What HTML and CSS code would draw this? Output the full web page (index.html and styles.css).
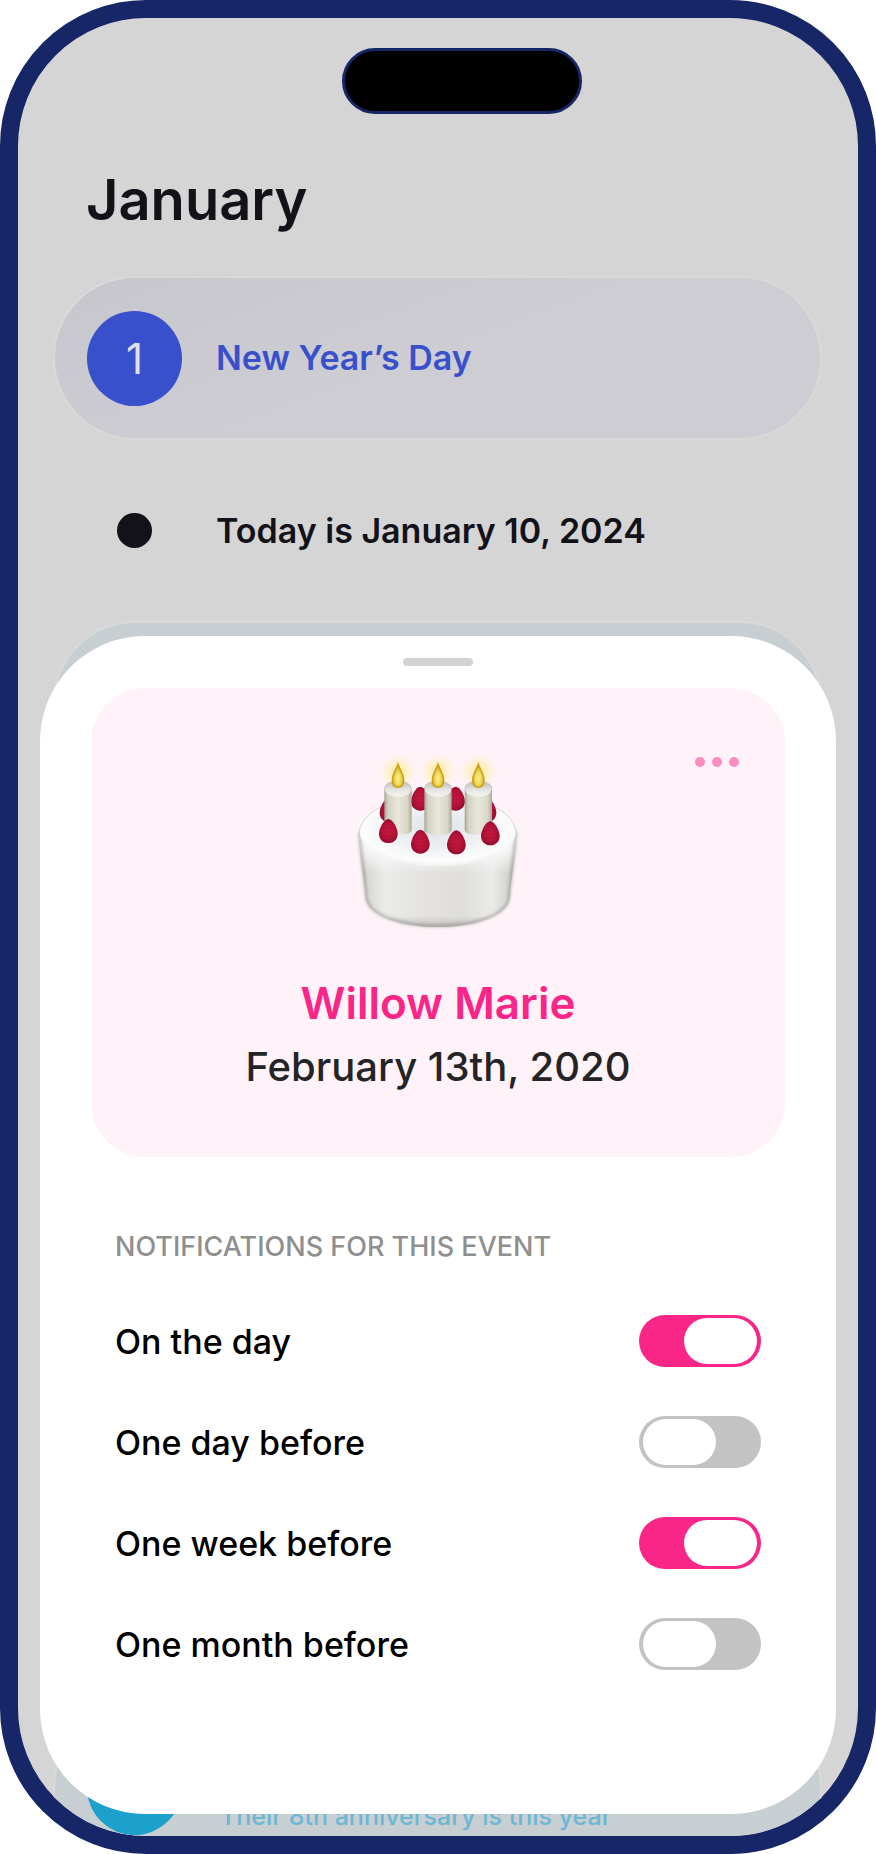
FILE: index.html
```html
<!DOCTYPE html>
<html lang="en">
<head>
<meta charset="utf-8">
<meta name="viewport" content="width=device-width, initial-scale=1">
<title>January</title>
<link rel="stylesheet" href="styles.css">
</head>
<body>
<div class="phone">
  <main class="timeline">
    <div class="island"></div>
    <h1 class="month">January</h1>
    <article class="event event--blue">
      <span class="event__day">1</span>
      <span class="event__title">New Year’s Day</span>
    </article>
    <div class="today">
      <span class="today__marker"><span class="today__dot"></span></span>
      <span class="event__title">Today is January 10, 2024</span>
    </div>
    <article class="event event--teal"></article>
    <article class="event event--teal event--last">
      <span class="event__day"></span>
      <span class="event__note">Their 8th anniversary is this year</span>
    </article>
  </main>

  <section class="sheet">
    <div class="sheet__handle"></div>
    <div class="card">
      <svg class="card__cake" viewBox="-7 -3 600 600" aria-hidden="true">
        <defs>
          <linearGradient id="side" x1="0" x2="1" y1="0" y2="0">
            <stop offset="0" stop-color="#b4b4b1"/><stop offset=".05" stop-color="#d6d6d3"/>
            <stop offset=".16" stop-color="#ebebea"/><stop offset=".35" stop-color="#e5e4e2"/>
            <stop offset=".65" stop-color="#dfdedb"/><stop offset=".85" stop-color="#eaeae9"/>
            <stop offset=".95" stop-color="#d3d3cf"/><stop offset="1" stop-color="#aaaaa7"/>
          </linearGradient>
          <linearGradient id="shade" x1="0" x2="0" y1="0" y2="1">
            <stop offset="0" stop-color="#fff"/><stop offset=".22" stop-color="#fff" stop-opacity=".75"/>
            <stop offset=".45" stop-color="#fff" stop-opacity="0"/><stop offset=".88" stop-color="#aaa" stop-opacity="0"/>
            <stop offset="1" stop-color="#777" stop-opacity=".4"/>
          </linearGradient>
          <radialGradient id="top" cx=".5" cy=".45" r=".55">
            <stop offset="0" stop-color="#dde2e6"/><stop offset=".55" stop-color="#eff2f4"/>
            <stop offset=".88" stop-color="#fcfcfc"/><stop offset="1" stop-color="#f1f1f1"/>
          </radialGradient>
          <linearGradient id="wax" x1="0" x2="1" y1="0" y2="0">
            <stop offset="0" stop-color="#a5a494"/><stop offset=".13" stop-color="#d2d1c2"/>
            <stop offset=".5" stop-color="#eae8dc"/><stop offset=".85" stop-color="#d8d6c7"/>
            <stop offset="1" stop-color="#aaa899"/>
          </linearGradient>
          <linearGradient id="waxtop" x1="0" x2="0" y1="0" y2="1">
            <stop offset="0" stop-color="#b9bab7"/><stop offset=".55" stop-color="#e4e5e2"/>
            <stop offset="1" stop-color="#f4f4ef"/>
          </linearGradient>
          <radialGradient id="glow">
            <stop offset="0" stop-color="#ffe98a" stop-opacity=".9"/><stop offset=".5" stop-color="#ffeeb0" stop-opacity=".6"/>
            <stop offset="1" stop-color="#fff3d0" stop-opacity="0"/>
          </radialGradient>
          <radialGradient id="fire" cx=".5" cy=".62" r=".5">
            <stop offset="0" stop-color="#f6ee8c"/><stop offset=".5" stop-color="#f0dc62"/>
            <stop offset="1" stop-color="#d8aa18"/>
          </radialGradient>
          <radialGradient id="red" cx=".5" cy=".5" r=".55">
            <stop offset="0" stop-color="#c4193f"/><stop offset=".6" stop-color="#b51238"/>
            <stop offset="1" stop-color="#8c0d2d"/>
          </radialGradient>
          <g id="berry">
            <path d="M0-36C13-36 28-8 28 8C28 25 16 36 0 36S-28 25-28 8C-28-8-13-36 0-36Z" fill="url(#red)"/>
            <path d="M-20-5L18-12M-24 7L23-2M-23 18L22 10M-13 28L17 22" stroke="#850b29" stroke-opacity=".35" stroke-width="2"/>
          </g>
          <g id="candle">
            <path d="M-41 146C-41 128-23 118 0 118S41 128 41 146V266C41 277 23 281 0 281S-41 277-41 266Z" fill="url(#wax)"/>
            <path d="M-39 145C-39 129-22 120 0 120S39 129 39 145C39 160 22 167 0 167S-39 160-39 145Z" fill="url(#waxtop)"/>
            <path d="M0 69C5 87 17 98 17 117C17 131 10 139 0 139S-17 131-17 117C-17 98-5 87 0 69Z" fill="url(#fire)" stroke="#cb9c16" stroke-width="4"/>
          </g>
          <filter id="soft" x="-10%" y="-10%" width="120%" height="120%"><feGaussianBlur stdDeviation="5"/></filter>
        </defs>
        <path d="M56 266C58 350 70 400 76 470C80 520 170 558 292 558S504 520 508 470C514 400 526 350 528 266Z" fill="url(#side)"/>
        <path d="M56 266C58 350 70 400 76 470C80 520 170 558 292 558S504 520 508 470C514 400 526 350 528 266Z" fill="url(#shade)"/>
        <path d="M58 275C62 350 73 410 78 470C83 518 170 555 292 555S501 518 506 470C511 410 522 350 526 275" fill="none" stroke="#91918c" stroke-opacity=".6" stroke-width="8" filter="url(#soft)"/>
        <path d="M56 264C58 210 150 168 292 168S526 210 528 264C528 330 430 376 292 376S56 330 56 264Z" fill="url(#top)"/>
        <path d="M56 286C53 214 145 168 292 168S531 214 528 286" fill="none" stroke="#bdbdbb" stroke-opacity=".7" stroke-width="3"/>
        <use href="#berry" x="146" y="207"/><use href="#berry" x="440" y="207"/>
        <use href="#berry" x="240" y="173"/><use href="#berry" x="346" y="173"/>
        <circle cx="173" cy="92" r="57" fill="url(#glow)"/><circle cx="293" cy="92" r="57" fill="url(#glow)"/><circle cx="415" cy="92" r="57" fill="url(#glow)"/>
        <use href="#candle" x="173"/><use href="#candle" x="293"/><use href="#candle" x="414"/>
        <use href="#berry" x="144" y="270"/><use href="#berry" x="240" y="302"/>
        <use href="#berry" x="348" y="304"/><use href="#berry" x="450" y="277"/>
      </svg>
      <button class="card__more" type="button" aria-label="More options"><span></span><span></span><span></span></button>
      <h2 class="card__name">Willow Marie</h2>
      <p class="card__date">February 13th, 2020</p>
    </div>
    <form class="notify">
      <h3 class="notify__heading">NOTIFICATIONS FOR THIS EVENT</h3>
      <label class="notify__row">On the day<input class="switch" type="checkbox" checked></label>
      <label class="notify__row">One day before<input class="switch" type="checkbox"></label>
      <label class="notify__row">One week before<input class="switch" type="checkbox" checked></label>
      <label class="notify__row">One month before<input class="switch" type="checkbox"></label>
    </form>
  </section>
</div>
</body>
</html>
```
FILE: styles.css
```css
* { box-sizing: border-box; }

body {
  margin: 0;
  background: #fff;
  font-family: Inter, "Liberation Sans", sans-serif;
}

h1, h2, h3, p { margin: 0; }

.phone {
  display: grid;
  min-height: 100vh;
  border: 18px solid #172666;
  border-radius: 146px;
  background: #d5d5d5;
  overflow: hidden;
}

.timeline {
  grid-area: 1 / 1;
  display: flex;
  flex-direction: column;
  padding: 30px 36px 0 35px;
}

.island {
  width: 240px;
  height: 66px;
  margin-left: 48px;
  align-self: center;
  border: 3px solid #172666;
  border-radius: 33px;
  background: #000;
}

.month {
  margin: 54px 0 44px 33px;
  font-size: 56px;
  font-weight: 600;
  line-height: 64px;
  color: #131219;
}

.event {
  display: flex;
  align-items: center;
  gap: 34px;
  height: 164px;
  padding: 0 32px;
  border: 2px solid #d9d9da;
  border-radius: 82px;
}

.event--blue {
  background: linear-gradient(160deg, #c6c7cc, #cdcdd3 50%);
  color: #3850cb;
}

.event--teal {
  background: #c8cfd2;
  color: #6cb7d3;
}

.event--last {
  align-items: flex-start;
  height: 130px;
  margin-top: auto;
  padding-top: 32px;
  border-bottom: 0;
  border-radius: 82px 82px 0 0;
}

.event__day {
  display: flex;
  align-items: center;
  justify-content: center;
  width: 95px;
  height: 95px;
  border-radius: 50%;
  background: #3850cb;
  color: #e0e0e6;
  font-size: 42px;
}

.event--teal .event__day { background: #1ba1cc; }

.event__title {
  font-size: 34px;
  font-weight: 600;
  line-height: 44px;
}

.event__note {
  padding: 60px 0 0 4px;
  font-size: 25px;
  font-weight: 500;
  line-height: 32px;
}

.today {
  display: flex;
  align-items: center;
  gap: 34px;
  height: 181px;
  padding: 0 34px;
  color: #131219;
}

.today__marker {
  display: flex;
  justify-content: center;
  width: 95px;
}

.today__dot {
  width: 35px;
  height: 35px;
  border-radius: 50%;
  background: #131219;
}

.sheet {
  grid-area: 1 / 1;
  align-self: end;
  display: flex;
  flex-direction: column;
  margin: 0 22px 22px;
  padding: 22px 51px 144px;
  border-radius: 105px;
  background: #fff;
  z-index: 1;
}

.sheet__handle {
  width: 70px;
  height: 8px;
  margin-bottom: 22px;
  align-self: center;
  border-radius: 4px;
  background: #d2d2d2;
}

.card {
  display: grid;
  justify-items: center;
  padding: 52px 40px 58px;
  border-radius: 54px;
  background: #fff3f9;
  text-align: center;
}

.card__cake {
  grid-area: 1 / 1;
  width: 200px;
  height: 200px;
  margin-bottom: 31px;
}

.card__more {
  grid-area: 1 / 1;
  justify-self: end;
  align-self: start;
  display: flex;
  align-items: center;
  gap: 7px;
  height: 44px;
  padding: 0 6px;
  border: 0;
  background: none;
}

.card__more span {
  width: 10px;
  height: 10px;
  border-radius: 50%;
  background: #fb8cc0;
}

.card__name {
  font-size: 44px;
  font-weight: 600;
  line-height: 64px;
  color: #f92587;
}

.card__date {
  font-size: 40px;
  font-weight: 500;
  line-height: 64px;
  color: #242426;
}

.notify {
  display: flex;
  flex-direction: column;
  gap: 49px;
  padding: 74px 24px 0;
}

.notify__heading {
  margin-bottom: 3px;
  font-size: 27px;
  font-weight: 500;
  line-height: 32px;
  color: #8f8f8f;
}

.notify__row {
  display: flex;
  align-items: center;
  justify-content: space-between;
  height: 52px;
  font-size: 34px;
  font-weight: 500;
  color: #000;
}

.switch {
  appearance: none;
  display: flex;
  width: 122px;
  height: 52px;
  margin: 0;
  padding: 3px 4px;
  border-radius: 26px;
  background: #c3c3c3;
}

.switch::before {
  content: "";
  width: 73px;
  border-radius: 23px;
  background: #fff;
}

.switch:checked {
  justify-content: flex-end;
  background: #f92587;
}
```
